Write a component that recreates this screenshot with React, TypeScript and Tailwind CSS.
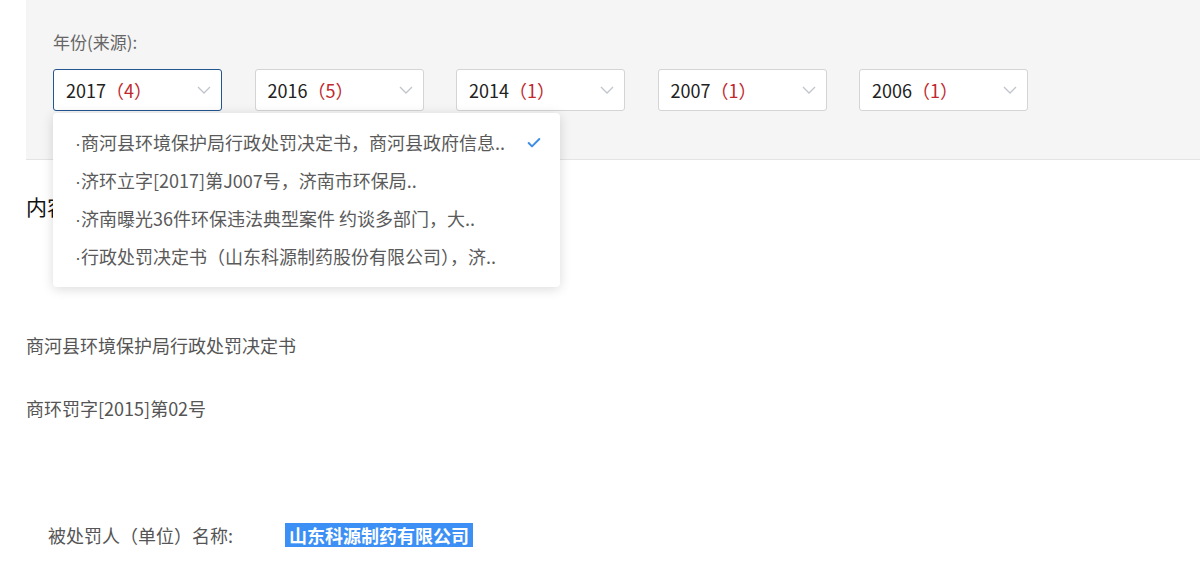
import { Check } from 'lucide-react';

const years = [
  { year: '2017', count: 4, active: true },
  { year: '2016', count: 5 },
  { year: '2014', count: 1 },
  { year: '2007', count: 1 },
  { year: '2006', count: 1 },
];

const options = [
  '商河县环境保护局行政处罚决定书，商河县政府信息..',
  '济环立字[2017]第J007号，济南市环保局..',
  '济南曝光36件环保违法典型案件 约谈多部门，大..',
  '行政处罚决定书（山东科源制药股份有限公司），济..',
];

function Chevron() {
  return (
    <svg width="14" height="8" viewBox="0 0 14 8" fill="none" className="shrink-0">
      <path d="M1 1l6 6 6-6" stroke="#c0c4cc" strokeWidth="1.3" />
    </svg>
  );
}

export default function App() {
  return (
    <div
      className="relative w-[1200px] h-[582px] overflow-hidden bg-white"
      style={{ fontFamily: '"Noto Sans CJK SC", "Microsoft YaHei", sans-serif' }}
    >
      {/* Filter bar */}
      <div className="ml-[26px] h-[160px] bg-[#f5f5f5] border-b border-[#e4e4e4] pl-[27px] pt-[30px]">
        <div className="text-[17px] leading-[24px] text-[#666]">年份(来源):</div>
        <div className="mt-[15px] flex gap-[32.5px]">
          {years.map((y) => (
            <div
              key={y.year}
              className={`w-[169px] h-[42px] flex items-center justify-between pl-[12px] pr-[10px] rounded-[3px] bg-white border ${
                y.active ? 'border-[#23558f]' : 'border-[#d4d4d4]'
              }`}
            >
              <span className="text-[18px] text-[#222] whitespace-nowrap">
                {y.year}
                <span className="text-[#c0282d]">（{y.count}）</span>
              </span>
              <Chevron />
            </div>
          ))}
        </div>
      </div>

      {/* Content */}
      <div className="px-[26px]">
        <div className="mt-[32px] text-[21px] leading-[28px] text-[#111]">内容</div>
        <div className="mt-[112px] text-[18px] leading-[26px] text-[#555]">商河县环境保护局行政处罚决定书</div>
        <div className="mt-[37px] text-[18px] leading-[26px] text-[#555]">商环罚字[2015]第02号</div>
        <div className="mt-[101px] pl-[22px] flex items-center text-[18px] leading-[26px] text-[#555]">
          <span className="w-[237px]">被处罚人（单位）名称:</span>
          <span className="bg-[#3b8ff5] text-white font-bold px-[4px] leading-[24px]">山东科源制药有限公司</span>
        </div>
      </div>

      {/* Dropdown */}
      <div className="absolute left-[53px] top-[113px] w-[507px] py-[11px] bg-white rounded-[4px] shadow-[0_2px_12px_rgba(0,0,0,0.15)]">
        {options.map((o, i) => (
          <div key={o} className="h-[38px] flex items-center justify-between pl-[22px] pr-[18px]">
            <span className="text-[18px] text-[#5a5a5a] whitespace-nowrap">
              <span className="font-['Liberation_Sans']">·</span>
              {o}
            </span>
            {i === 0 && <Check className="w-[16px] h-[16px] text-[#3f8ee6]" strokeWidth={3} />}
          </div>
        ))}
      </div>
    </div>
  );
}
